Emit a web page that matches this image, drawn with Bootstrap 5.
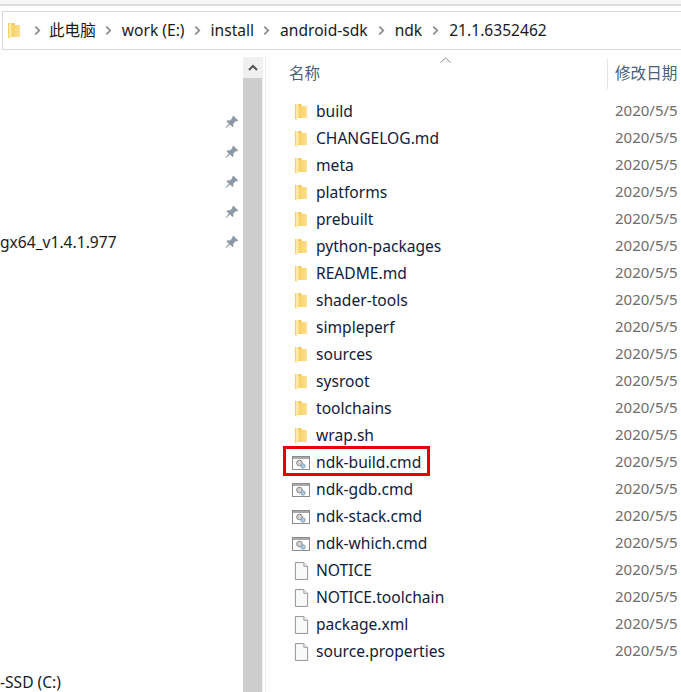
<!DOCTYPE html>
<html lang="zh">
<head>
<meta charset="UTF-8">
<title>21.1.6352462</title>
<link href="https://cdn.jsdelivr.net/npm/bootstrap@5.3.0/dist/css/bootstrap.min.css" rel="stylesheet">
<style>
html, body { height: 692px; overflow: hidden; }
body { font-family: "Noto Sans", "Noto Sans CJK SC", sans-serif; font-size: 15.6px; color: #1a1a1a; background: #fff; }
.top-strip { height: 6px; background: #f5f6f7; border-bottom: 2px solid #dcdcdc; }
.addr-bar { height: 39px; margin: 5px 0 0 2px; border: 1px solid #d9d9d9; border-right: 0; padding-left: 5px; }
.addr-item { margin-left: 10px; margin-right: 9px; }
.addr-item:first-of-type { margin-left: 8px; }
.addr-wide { margin-right: 10px; }
.addr-first { margin-left: 5px; }
.addr-folder { margin-right: 9px; }
.main-area { height: 635px; margin-top: 7px; }
.nav-pane { width: 243px; padding-top: 50px; }
.pin-row { height: 30px; padding-right: 4px; }
.pin-label { white-space: nowrap; padding-top: 2px; }
.drive-label { margin-top: 414px; }
.scroll-track { width: 20px; background: #f0f0f0; }
.scroll-up { height: 21px; }
.scroll-thumb { background: #cdcdcd; width: 19px; }
.divider-v { width: 1px; background: #efefef; margin-left: 2px; }
.list-pane { padding-left: 23px; }
.list-head { height: 32px; color: #4c607a; position: relative; padding-top: 2px; }
.col-name { width: 318px; }
.sort-caret { position: absolute; left: 151px; top: 0; }
.head-date { border-left: 1px solid #e5e5e5; padding-left: 7px; white-space: nowrap; }
.list-rows { margin-top: 8px; }
.file-row { height: 27px; position: relative; white-space: nowrap; }
.file-name { width: 318px; color: #10203a; line-height: 26px; }
.file-icon { width: 18px; margin-left: 3px; margin-right: 6px; padding-top: 2px; }
.file-date { color: #6d6d6d; padding-left: 8px; font-size: 15px; }
.red-box { position: absolute; left: -6px; top: -2px; width: 147px; height: 30px; border: 3px solid #e60000; }
</style>
</head>
<body>
<svg width="0" height="0" class="position-absolute">
  <defs>
    <linearGradient id="fold" x1="0" y1="0" x2="1" y2="0">
      <stop offset="0" stop-color="#f7cf62"/><stop offset="1" stop-color="#fbe08f"/>
    </linearGradient>
    <symbol id="i-folder" viewBox="0 0 12 16">
      <path d="M0 0h6l1 2h5v12H3z" fill="#f2c650"/>
      <path d="M3 2h9v12H3z" fill="url(#fold)"/>
      <path d="M0 0h3.500v13L2 16 .7 15.500 0 14z" fill="#fee9a6"/>
      <path d="M0 0h1v15H0z" fill="#f6cf63"/>
    </symbol>
    <symbol id="i-cmd" viewBox="0 0 18 16">
      <rect x=".5" y="1.500" width="17" height="13" fill="#fff" stroke="#8c8c8c"/>
      <rect x="1" y="2" width="16" height="2" fill="#a9a9a9"/>
      <circle cx="7.500" cy="8" r="2.800" fill="#d4d4d4" stroke="#858585"/>
      <circle cx="11" cy="11" r="2.200" fill="#a8cdea" stroke="#7f95aa" stroke-width=".8"/>
    </symbol>
    <symbol id="i-file" viewBox="0 0 16 19">
      <path d="M1.500 .5h9l4 4v14h-13z" fill="#f8f9f9" stroke="#8e8e8e"/>
      <path d="M10.500 .5v4h4" fill="#ececec" stroke="#9a9a9a"/>
    </symbol>
    <symbol id="i-pin" viewBox="0 0 14 14">
      <path d="M8.500 .8l4.700 4.700-1.300 1-1-.5-2.700 2.700.3 2.300-1 1-2.500-2.500L1 13l-.5-.5 3.400-3.800L1.500 6.300l1-1 2.300.3 2.700-2.700-.5-1z" fill="#8b98a5"/>
    </symbol>
    <symbol id="i-chev" viewBox="0 0 8 12">
      <path d="M1.500 1.500 6 6l-4.500 4.500" fill="none" stroke="#8a8a8a" stroke-width="2"/>
    </symbol>
  </defs>
</svg>

<div class="top-strip"></div>

<div class="addr-bar d-flex align-items-center">
  <svg class="addr-folder" width="12" height="16"><use href="#i-folder"/></svg>
  <span class="d-flex align-items-center flex-grow-1 addr-first">
    <svg width="7" height="11"><use href="#i-chev"/></svg><span class="addr-item">此电脑</span>
    <svg width="7" height="11"><use href="#i-chev"/></svg><span class="addr-item">work (E:)</span>
    <svg width="7" height="11"><use href="#i-chev"/></svg><span class="addr-item">install</span>
    <svg width="7" height="11"><use href="#i-chev"/></svg><span class="addr-item addr-wide">android-sdk</span>
    <svg width="7" height="11"><use href="#i-chev"/></svg><span class="addr-item addr-wide">ndk</span>
    <svg width="7" height="11"><use href="#i-chev"/></svg><span class="addr-item">21.1.6352462</span>
  </span>
</div>

<div class="main-area d-flex">
  <div class="nav-pane flex-shrink-0">
    <div class="pin-row d-flex justify-content-end align-items-center"><svg width="14" height="14"><use href="#i-pin"/></svg></div>
    <div class="pin-row d-flex justify-content-end align-items-center"><svg width="14" height="14"><use href="#i-pin"/></svg></div>
    <div class="pin-row d-flex justify-content-end align-items-center"><svg width="14" height="14"><use href="#i-pin"/></svg></div>
    <div class="pin-row d-flex justify-content-end align-items-center"><svg width="14" height="14"><use href="#i-pin"/></svg></div>
    <div class="pin-row d-flex justify-content-between align-items-center"><span class="pin-label">gx64_v1.4.1.977</span><svg width="14" height="14"><use href="#i-pin"/></svg></div>
    <div class="drive-label">-SSD (C:)</div>
  </div>
  <div class="scroll-track flex-shrink-0 d-flex flex-column">
    <div class="scroll-up d-flex align-items-center justify-content-center">
      <svg width="10" height="7"><path d="M1 6l4-4 4 4" fill="none" stroke="#555" stroke-width="2"/></svg>
    </div>
    <div class="scroll-thumb flex-grow-1"></div>
  </div>
  <div class="divider-v flex-shrink-0"></div>
  <div class="list-pane flex-grow-1 overflow-hidden">
    <div class="list-head d-flex align-items-center">
      <div class="col-name flex-shrink-0">名称</div>
      <svg class="sort-caret" width="11" height="6"><path d="M.5 5.500 5.500 1l5 4.500" fill="none" stroke="#8a8a8a"/></svg>
      <div class="head-date h-100 d-flex align-items-center">修改日期</div>
    </div>
    <div class="list-rows" id="rows"></div>
  </div>
</div>

<script>
  var files = [
    ["build", "folder"], ["CHANGELOG.md", "folder"], ["meta", "folder"], ["platforms", "folder"],
    ["prebuilt", "folder"], ["python-packages", "folder"], ["README.md", "folder"], ["shader-tools", "folder"],
    ["simpleperf", "folder"], ["sources", "folder"], ["sysroot", "folder"], ["toolchains", "folder"],
    ["wrap.sh", "folder"], ["ndk-build.cmd", "cmd"], ["ndk-gdb.cmd", "cmd"], ["ndk-stack.cmd", "cmd"],
    ["ndk-which.cmd", "cmd"], ["NOTICE", "file"], ["NOTICE.toolchain", "file"], ["package.xml", "file"],
    ["source.properties", "file"]
  ];
  var sizes = { folder: [12, 16], cmd: [18, 16], file: [15, 18] };
  document.getElementById("rows").innerHTML = files.map(function (f) {
    var s = sizes[f[1]];
    var box = f[0] === "ndk-build.cmd" ? '<span class="red-box"></span>' : "";
    return '<div class="file-row d-flex align-items-center">' + box +
      '<div class="file-name d-flex align-items-center flex-shrink-0">' +
      '<span class="file-icon d-flex justify-content-center"><svg width="' + s[0] + '" height="' + s[1] + '"><use href="#i-' + f[1] + '"/></svg></span>' +
      f[0] + '</div><div class="file-date">2020/5/5</div></div>';
  }).join("");
</script>
<script src="https://cdn.jsdelivr.net/npm/bootstrap@5.3.0/dist/js/bootstrap.bundle.min.js"></script>
</body>
</html>
